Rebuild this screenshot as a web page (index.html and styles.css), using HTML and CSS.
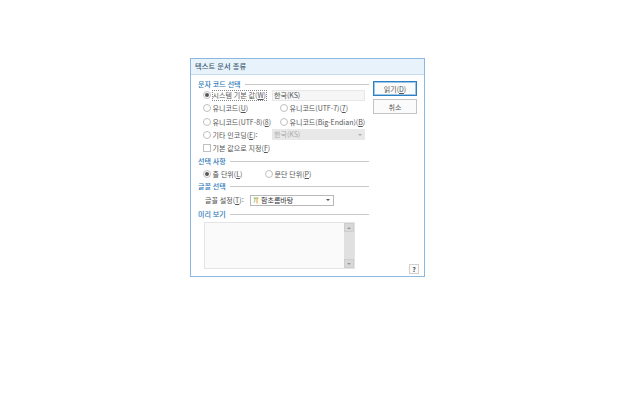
FILE: index.html
```html
<!DOCTYPE html>
<html lang="ko">
<head>
  <meta charset="UTF-8">
  <title>텍스트 문서 종류</title>
  <link rel="stylesheet" href="styles.css">
</head>
<body>
  <div class="dialog">
    <div class="title">텍스트 문서 종류</div>
    <div class="content">
      <div class="main">
        <!-- 문자 코드 -->
        <div class="group-title"><span>문자 코드 선택</span></div>
        <div class="row">
          <span class="opt w-system"><i class="radio on"></i><span class="focus">시스템 기본 값(<u>W</u>)</span></span>
          <span class="field">한국(KS)</span>
        </div>
        <div class="row">
          <span class="opt w-left"><i class="radio"></i>유니코드(<u>U</u>)</span>
          <span class="opt"><i class="radio"></i>유니코드(UTF-7)(<u>7</u>)</span>
        </div>
        <div class="row">
          <span class="opt w-left"><i class="radio"></i>유니코드(UTF-8)(<u>8</u>)</span>
          <span class="opt"><i class="radio"></i>유니코드(Big-Endian)(<u>B</u>)</span>
        </div>
        <div class="row">
          <span class="opt w-system"><i class="radio"></i>기타 인코딩(<u>E</u>):</span>
          <span class="field disabled">한국(KS)<b class="tiny-arrow"></b></span>
        </div>
        <div class="row">
          <span class="opt"><i class="check"></i>기본 값으로 지정(<u>F</u>)</span>
        </div>

        <!-- 선택 사항 -->
        <div class="group-title sec2"><span>선택 사항</span></div>
        <div class="row line-row">
          <span class="opt w-line"><i class="radio on"></i>줄 단위(<u>L</u>)</span>
          <span class="opt"><i class="radio"></i>문단 단위(<u>P</u>)</span>
        </div>

        <!-- 글꼴 -->
        <div class="group-title sec3"><span>글꼴 선택</span></div>
        <div class="row font-row">
          <span class="font-label">글꼴 설정(<u>T</u>):</span>
          <span class="combo">
            <svg class="font-icon" width="6" height="7" viewBox="0 0 6 7"><path d="M0.5 1H5.5M2 1C2 3 1.7 4.5 1 5.5" fill="none" stroke="#8dbb5a" stroke-width="1"/><path d="M4 1V6.5" fill="none" stroke="#e0a030" stroke-width="1"/></svg>
            <span>함초롬바탕</span><b class="arrow"></b>
          </span>
        </div>

        <!-- 미리 보기 -->
        <div class="group-title sec4"><span>미리 보기</span></div>
        <div class="preview">
          <div class="scrollbar">
            <span class="scroll-btn"><b class="up"></b></span>
            <span class="scroll-btn"><b class="down"></b></span>
          </div>
        </div>
      </div>
      <div class="side">
        <button class="btn default">읽기(<u>D</u>)</button>
        <button class="btn">취소</button>
        <button class="help">?</button>
      </div>
    </div>
  </div>
</body>
</html>
```

FILE: styles.css
```css
/* General Styles */
body {
  margin: 0;
  background: #ffffff;
  font-family: "Noto Sans CJK KR", "Liberation Sans", sans-serif;
  font-size: 7px;
  color: #555;
}
.dialog {
  width: 233px;
  height: 217px;
  margin: 58px 0 0 190px;
  border: 1px solid #8ab8e2;
  background: #fff;
}
.title {
  height: 15px;
  line-height: 15px;
  padding-left: 4px;
  background: #e8f2fa;
  border-bottom: 1px solid #c4dcf0;
  color: #3b5a74;
  font-size: 7.2px;
  font-weight: 500;
  letter-spacing: 0.1px;
}
.content {
  display: flex;
  padding-left: 6px;
}
.main {
  width: 172px;
  padding-top: 5px;
}
u {
  text-decoration: underline;
}

/* Group headings */
.group-title {
  display: flex;
  align-items: center;
  gap: 4px;
  height: 8px;
  padding-left: 1px;
  line-height: 8px;
  color: #2c78b8;
  font-size: 7px;
  font-weight: 500;
}
.group-title::after {
  content: "";
  flex: 1;
  height: 1px;
  background: #c8c8c8;
}
.sec2 { margin-top: 2.4px; }
.sec3 { margin-top: 1.4px; }
.sec4 { margin-top: 2.5px; }

/* Option rows */
.row {
  display: flex;
  align-items: center;
  height: 13.25px;
  padding-left: 6px;
  white-space: nowrap;
}
.row:nth-child(2) { margin-top: 0.4px; }
.line-row { margin-top: 2.4px; }
.opt {
  display: flex;
  align-items: center;
}
.w-system { width: 69px; }
.w-left { width: 77px; }
.w-line { width: 62px; }
.radio {
  width: 6px;
  height: 6px;
  margin-right: 1.5px;
  border: 1px solid #c0c0c0;
  border-radius: 50%;
  background: #fff;
  position: relative;
}
.radio.on::after {
  content: "";
  position: absolute;
  left: 1px;
  top: 1px;
  width: 4px;
  height: 4px;
  border-radius: 50%;
  background: #555;
}
.check {
  width: 6px;
  height: 6px;
  margin-right: 1.5px;
  border: 1px solid #c0c0c0;
  background: #fff;
}
.focus {
  outline: 1px dotted #888;
  line-height: 9px;
}
.field {
  position: relative;
  width: 91px;
  height: 11px;
  line-height: 11px;
  padding-left: 2px;
  background: #f6f6f6;
  box-shadow: inset 0 0 0 1px #e8e8e8;
}
.field.disabled {
  color: #aaa;
  background: #e8e8e8;
}
.tiny-arrow {
  position: absolute;
  right: 3px;
  top: 5px;
  border: 2px solid transparent;
  border-top-color: #aaa;
  border-bottom: 0;
}

/* Font row */
.font-row {
  height: 15px;
  margin-top: 2.5px;
}
.font-label {
  width: 45px;
  padding-left: 2px;
}
.combo {
  position: relative;
  display: flex;
  align-items: center;
  gap: 2px;
  width: 80px;
  height: 9px;
  padding-left: 2px;
  border: 1px solid #b8b8b8;
  color: #333;
}
.arrow {
  position: absolute;
  right: 3px;
  top: 3px;
  border: 2px solid transparent;
  border-top-color: #555;
  border-bottom: 0;
}

/* Preview */
.preview {
  display: flex;
  justify-content: flex-end;
  width: 149px;
  height: 45px;
  margin: 4px 0 0 7px;
  border: 1px solid #e4e4e4;
  background: #fafafa;
}
.scrollbar {
  display: flex;
  flex-direction: column;
  justify-content: space-between;
  width: 10px;
  background: #e0e0e0;
}
.scroll-btn {
  display: flex;
  align-items: center;
  justify-content: center;
  height: 9px;
  background: #d8d8d8;
  border: 1px solid #cecece;
  box-sizing: border-box;
}
.up, .down {
  border: 2px solid transparent;
}
.up { border-bottom-color: #999; border-top: 0; }
.down { border-top-color: #999; border-bottom: 0; }

/* Buttons */
.side {
  display: flex;
  flex-direction: column;
  align-items: flex-start;
  padding: 6px 0 0 4px;
}
button {
  font-family: inherit;
  font-size: 7px;
  color: #555;
  background: #fbfbfb;
  padding: 0;
  cursor: pointer;
}
.btn {
  width: 44px;
  height: 15px;
  margin-bottom: 3px;
  border: 1px solid #c4c4c4;
}
.btn.default {
  border: 1px solid #2f7fc0;
  box-shadow: inset 0 0 0 1px #9cc6e8;
}
.help {
  width: 10px;
  height: 10px;
  margin: 147px 0 0 36px;
  border: 1px solid #d0d0d0;
  font-weight: 700;
  line-height: 8px;
}
```
